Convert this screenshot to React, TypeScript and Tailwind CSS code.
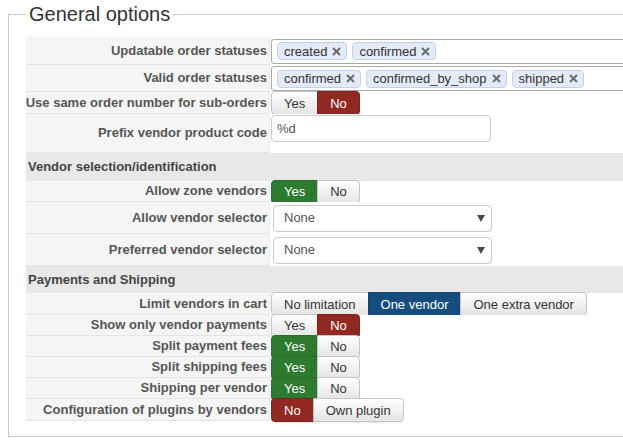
import React from "react";

type Tone = "green" | "red" | "blue";

const toneClass: Record<Tone, string> = {
  green: "bg-[#2d7a30] border-[#2a6e2c] text-white",
  red: "bg-[#912822] border-[#83231e] text-white",
  blue: "bg-[#174c7e] border-[#144471] text-white",
};

type Opt = { label: string; active?: Tone };

function ButtonGroup({ options }: { options: Opt[] }) {
  return (
    <div className="flex h-[24px]">
      {options.map((o, i) => {
        const first = i === 0;
        const last = i === options.length - 1;
        const base = o.active
          ? toneClass[o.active]
          : "bg-gradient-to-b from-white to-[#e4e4e4] border-[#c6c6c6] text-[#333]";
        return (
          <div
            key={o.label}
            className={`flex items-center px-3 border text-[13px] leading-none shadow-[0_1px_1px_rgba(0,0,0,0.08)] ${base} ${
              first ? "rounded-l-[4px]" : "-ml-px"
            } ${last ? "rounded-r-[4px]" : ""}`}
          >
            {o.label}
          </div>
        );
      })}
    </div>
  );
}

function Tag({ text }: { text: string }) {
  return (
    <div className="flex items-center h-[18px] pl-[6px] pr-[5px] gap-[5px] rounded-[4px] border border-[#c4d0ea] bg-[#e3eaf8] text-[13px] text-[#333] leading-none">
      <span>{text}</span>
      <svg width="9" height="9" viewBox="0 0 9 9">
        <path d="M1 1 L8 8 M8 1 L1 8" stroke="#6b6b6b" strokeWidth="2" />
      </svg>
    </div>
  );
}

function TagInput({ tags }: { tags: string[] }) {
  return (
    <div className="flex items-center gap-[5px] h-[25px] w-[420px] pl-[5px] border border-[#a9a9a9] rounded-[3px] bg-white">
      {tags.map((t) => (
        <Tag key={t} text={t} />
      ))}
    </div>
  );
}

function TextInput({ value }: { value: string }) {
  return (
    <div className="flex items-center h-[27px] w-[220px] px-[5px] border border-[#cccccc] rounded-[4px] bg-white text-[13px] text-[#555]">
      {value}
    </div>
  );
}

function Select({ value }: { value: string }) {
  return (
    <div className="flex items-center justify-between h-[27px] w-[219px] ml-[2px] pl-[10px] pr-[6px] border border-[#cccccc] rounded-[4px] bg-white text-[13px] text-[#555]">
      <span>{value}</span>
      <svg width="8" height="7" viewBox="0 0 8 7">
        <polygon points="0,0 8,0 4,7" fill="#4a4a4a" />
      </svg>
    </div>
  );
}

function Row({
  label,
  h,
  children,
}: {
  label: string;
  h: string;
  children: React.ReactNode;
}) {
  return (
    <div className={`flex ${h}`}>
      <div className="w-[243px] shrink-0 flex items-center justify-end pr-[2px] bg-[#f5f5f5] border-b border-[#e4e4e4] text-[13px] font-bold text-[#555] whitespace-nowrap">
        {label}
      </div>
      <div className="w-px shrink-0 bg-[#ececec]" />
      <div className="flex-1 flex items-center pl-px bg-white">{children}</div>
    </div>
  );
}

function Section({ title, h }: { title: string; h: string }) {
  return (
    <div
      className={`flex items-center ${h} pl-[2px] bg-[#e8e8e8] text-[13px] font-bold text-[#444]`}
    >
      {title}
    </div>
  );
}

const yesNo = (active: "yes" | "no"): Opt[] => [
  { label: "Yes", active: active === "yes" ? "green" : undefined },
  { label: "No", active: active === "no" ? "red" : undefined },
];

export default function App() {
  return (
    <div
      className="w-[623px] h-[447px] overflow-hidden bg-white"
      style={{ fontFamily: '"Liberation Sans", Arial, sans-serif' }}
    >
      <fieldset className="ml-[8px] mt-[4px] w-[680px] border border-[#cccccc] pl-[17px] pt-[12px] pb-[15px]">
        <legend className="px-[3px] text-[20px] leading-[21px] text-[#333]">
          General options
        </legend>
        <div className="flex flex-col">
          <Row label="Updatable order statuses" h="h-[28px]">
            <TagInput tags={["created", "confirmed"]} />
          </Row>
          <Row label="Valid order statuses" h="h-[27px]">
            <TagInput tags={["confirmed", "confirmed_by_shop", "shipped"]} />
          </Row>
          <Row label="Use same order number for sub-orders" h="h-[22px]">
            <ButtonGroup options={yesNo("no")} />
          </Row>
          <Row label="Prefix vendor product code" h="h-[39px]">
            <div className="self-start mt-px">
              <TextInput value="%d" />
            </div>
          </Row>
          <Section title="Vendor selection/identification" h="h-[28px]" />
          <Row label="Allow zone vendors" h="h-[21px]">
            <ButtonGroup options={yesNo("yes")} />
          </Row>
          <Row label="Allow vendor selector" h="h-[32px]">
            <Select value="None" />
          </Row>
          <Row label="Preferred vendor selector" h="h-[32px]">
            <Select value="None" />
          </Row>
          <Section title="Payments and Shipping" h="h-[27px]" />
          <Row label="Limit vendors in cart" h="h-[22px]">
            <ButtonGroup
              options={[
                { label: "No limitation" },
                { label: "One vendor", active: "blue" },
                { label: "One extra vendor" },
              ]}
            />
          </Row>
          <Row label="Show only vendor payments" h="h-[21px]">
            <ButtonGroup options={yesNo("no")} />
          </Row>
          <Row label="Split payment fees" h="h-[21px]">
            <ButtonGroup options={yesNo("yes")} />
          </Row>
          <Row label="Split shipping fees" h="h-[21px]">
            <ButtonGroup options={yesNo("yes")} />
          </Row>
          <Row label="Shipping per vendor" h="h-[21px]">
            <ButtonGroup options={yesNo("yes")} />
          </Row>
          <Row label="Configuration of plugins by vendors" h="h-[22px]">
            <ButtonGroup
              options={[{ label: "No", active: "red" }, { label: "Own plugin" }]}
            />
          </Row>
        </div>
      </fieldset>
    </div>
  );
}
